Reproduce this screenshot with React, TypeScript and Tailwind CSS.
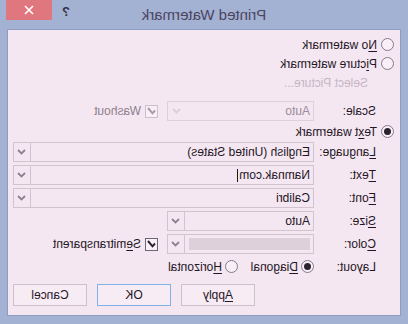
import React from "react";

const TEXT = "text-[#1f1626]";

function Radio({ checked }: { checked?: boolean }) {
  return (
    <span className="w-[13px] h-[13px] rounded-full border border-[#857a8a] bg-[#f9f0f7] flex items-center justify-center shrink-0">
      {checked && <span className="w-[7px] h-[7px] rounded-full bg-[#2b2230]" />}
    </span>
  );
}

function Check({ disabled }: { disabled?: boolean }) {
  const c = disabled ? "#a89aa8" : "#2b2230";
  return (
    <span
      className={`w-[13px] h-[13px] border flex items-center justify-center shrink-0 bg-[#f9f0f7] ${
        disabled ? "border-[#cdbfcb]" : "border-[#6f6474]"
      }`}
    >
      <svg width="9" height="8" viewBox="0 0 9 8">
        <path d="M1 3.5l2.5 2.8L8 1" stroke={c} strokeWidth="2" fill="none" />
      </svg>
    </span>
  );
}

function Chevron({ disabled }: { disabled?: boolean }) {
  return (
    <svg width="9" height="6" viewBox="0 0 9 6">
      <path d="M1 1l3.5 3.5L8 1" stroke={disabled ? "#dccdd8" : "#8f8090"} strokeWidth="1.8" fill="none" />
    </svg>
  );
}

function Combo({
  children,
  narrow,
  disabled,
}: {
  children?: React.ReactNode;
  narrow?: boolean;
  disabled?: boolean;
}) {
  return (
    <div
      className={`h-[20px] flex border ${narrow ? "w-[147px]" : "w-full"} ${
        disabled ? "border-[#ddd0da]" : "border-[#d2c4cf]"
      }`}
    >
      <div className={`flex-1 flex items-center pl-[3px] ${disabled ? "text-[#9a8c9a]" : TEXT}`}>{children}</div>
      <div
        className={`w-[17px] flex items-center justify-center ${disabled ? "" : "border-l border-[#d2c4cf]"}`}
      >
        <Chevron disabled={disabled} />
      </div>
    </div>
  );
}

function Label({ k, rest }: { k: string; rest: string }) {
  return (
    <span className={`${TEXT} flex items-center`}>
      <span className="underline underline-offset-2">{k}</span>
      {rest}
    </span>
  );
}

export default function App() {
  return (
    <div className="w-[408px] h-[324px] bg-[#a3b1d3] -scale-x-100 font-['Liberation_Sans',Arial,sans-serif] text-[12px] leading-none overflow-hidden">
      {/* title bar */}
      <div className="h-[29px] relative">
        <div className="absolute inset-0 flex items-center justify-center text-[15px] text-[#4b4560]">
          Printed Watermark
        </div>
        <div className="relative flex justify-end items-start pr-[6px] gap-[10px]">
          <span className="mt-[5px] text-[13px] font-bold text-[#3a3340]">?</span>
          <div className="w-[46px] h-[20px] bg-[#e0777f] flex items-center justify-center">
            <svg width="10" height="10" viewBox="0 0 10 10">
              <path d="M1 1l8 8M9 1l-8 8" stroke="#fff" strokeWidth="1.6" />
            </svg>
          </div>
        </div>
      </div>

      {/* panel */}
      <div className="mx-[7px] h-[287px] border border-[#8f9dc6] bg-[#f5e7f1] flex flex-col pt-[5px]">
        <div className="h-[19px] flex items-center gap-[4px] pl-[6px]">
          <Radio />
          <Label k="N" rest="o watermark" />
        </div>
        <div className="h-[19px] flex items-center gap-[4px] pl-[6px]">
          <Radio />
          <span className={`${TEXT}`}>
            P<span className="underline underline-offset-2">i</span>cture watermark
          </span>
        </div>
        <div className="h-[20px] flex items-center pl-[32px] text-[#c6b6c4]">Select Picture...</div>

        <div className="grid grid-cols-[62px_1fr] gap-y-[3px] pl-[24px] pr-[5px] mt-[8px]">
          <span className="flex items-center text-[#1f1626]">Scale:</span>
          <div className="flex items-center gap-[9px]">
            <Combo narrow disabled>
              Auto
            </Combo>
            <div className="flex items-center gap-[4px] text-[#8d7f8d]">
              <Check disabled />
              <span>Washout</span>
            </div>
          </div>

          <div className="col-span-2 -ml-[18px] h-[19px] flex items-center gap-[4px] mt-[-2px] mb-[-2px]">
            <Radio checked />
            <span className={TEXT}>
              Te<span className="underline underline-offset-2">x</span>t watermark
            </span>
          </div>

          <Label k="L" rest="anguage:" />
          <Combo>English (United States)</Combo>

          <Label k="T" rest="ext:" />
          <Combo>
            Namnak.com
            <span className="inline-block w-px h-[13px] bg-[#1f1626] ml-[1px]" />
          </Combo>

          <Label k="F" rest="ont:" />
          <Combo>Calibri</Combo>

          <Label k="S" rest="ize:" />
          <Combo narrow>Auto</Combo>

          <Label k="C" rest="olor:" />
          <div className="flex items-center gap-[9px]">
            <Combo narrow>
              <div className="w-[121px] h-[12px] bg-[#ddd0da]" />
            </Combo>
            <div className={`flex items-center gap-[4px] ${TEXT}`}>
              <Check />
              <span>
                S<span className="underline underline-offset-2">e</span>mitransparent
              </span>
            </div>
          </div>

          <span className={`${TEXT} flex items-center h-[19px]`}>Layout:</span>
          <div className="flex items-center h-[19px]">
            <div className="w-[76px] flex items-center gap-[3px]">
              <Radio checked />
              <Label k="D" rest="iagonal" />
            </div>
            <div className="flex items-center gap-[3px]">
              <Radio />
              <Label k="H" rest="orizontal" />
            </div>
          </div>
        </div>

        <div className="flex justify-end gap-[10px] pr-[5px] mt-[8px]">
          <button className={`w-[74px] h-[22px] border border-[#cdc0ca] bg-[#f7ebf4] ${TEXT}`}>
            <span className="underline underline-offset-2">A</span>pply
          </button>
          <button className={`w-[74px] h-[22px] border border-[#7fb3e8] bg-[#f7ebf4] ${TEXT}`}>OK</button>
          <button className={`w-[74px] h-[22px] border border-[#cdc0ca] bg-[#f7ebf4] ${TEXT}`}>Cancel</button>
        </div>
      </div>
    </div>
  );
}
